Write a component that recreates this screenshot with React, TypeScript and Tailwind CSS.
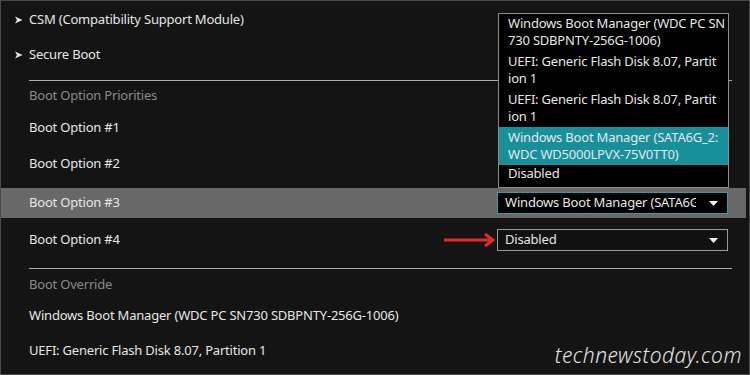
import React from 'react';

const font = { fontFamily: '"Noto Sans", "Open Sans", sans-serif' };

function Pointer() {
  return (
    <svg width="8" height="8" viewBox="0 0 8 8" className="absolute left-[-14px] top-1/2 -translate-y-1/2">
      <path d="M0 0.5 L7.5 4 L0 7.5 L2 4 Z" fill="#e8e8e8" />
    </svg>
  );
}

function Caret() {
  return (
    <svg width="9" height="5" viewBox="0 0 9 5">
      <path d="M0 0 H9 L4.5 5 Z" fill="#f2f2f2" />
    </svg>
  );
}

function RedArrow() {
  return (
    <svg width="52" height="14" viewBox="0 0 52 14" className="mr-[1px]">
      <path d="M0 7 H48" stroke="#e8262b" strokeWidth="3" />
      <path d="M41 1 L49 7 L41 13" stroke="#e8262b" strokeWidth="3" fill="none" />
    </svg>
  );
}

const listItems = [
  { lines: ['Windows Boot Manager (WDC PC SN', '730 SDBPNTY-256G-1006)'], pad: 'pt-[1px] pb-[2px]' },
  { lines: ['UEFI: Generic Flash Disk 8.07, Partit', 'ion 1'], pad: 'py-[2px]' },
  { lines: ['UEFI: Generic Flash Disk 8.07, Partit', 'ion 1'], pad: 'py-[2px]' },
  { lines: ['Windows Boot Manager (SATA6G_2:', 'WDC WD5000LPVX-75V0TT0)'], pad: 'py-[2px]', active: true },
  { lines: ['Disabled'], pad: 'pt-0 pb-[5px]' },
];

export default function App() {
  return (
    <div className="relative w-[750px] h-[375px] overflow-hidden bg-[#141414] border border-[#4a4a4a] text-[13px] tracking-[-0.2px] text-[#e6e6e6]" style={font}>
      <div className="flex flex-col pt-[1px]">
        <div className="relative h-[35px] flex items-center ml-[28px]"><Pointer />CSM (Compatibility Support Module)</div>
        <div className="relative h-[35px] flex items-center ml-[28px]"><Pointer />Secure Boot</div>
        <div className="h-[8px]" />
        <div className="h-px bg-[#a9a9a9] ml-[28px] mr-[17px]" />
        <div className="h-[30px] flex items-center ml-[28px] text-[#8a8a8a]">Boot Option Priorities</div>
        <div className="h-[34px] flex items-center ml-[28px]">Boot Option #1</div>
        <div className="h-[38px] flex items-center ml-[28px]">Boot Option #2</div>
        <div className="h-[5px]" />
        <div className="h-[30px] flex items-center bg-[#686868] mr-[3px]">
          <span className="ml-[28px] flex-1">Boot Option #3</span>
          <div className="w-[231px] h-[22px] mr-[18px] flex items-center justify-between bg-black border border-[#2aa0a8] pl-[7px] pr-[9px]">
            <span className="w-[191px] overflow-hidden whitespace-nowrap">Windows Boot Manager (SATA6G_2:</span>
            <Caret />
          </div>
        </div>
        <div className="h-[44px] flex items-center">
          <span className="ml-[28px] flex-1">Boot Option #4</span>
          <RedArrow />
          <div className="w-[231px] h-[22px] mr-[21px] flex items-center justify-between bg-[#111] border border-[#9a9a9a] pl-[7px] pr-[9px]">
            <span>Disabled</span>
            <Caret />
          </div>
        </div>
        <div className="h-[6px]" />
        <div className="h-px bg-[#a9a9a9] ml-[28px] mr-[17px]" />
        <div className="h-[32px] flex items-center ml-[28px] text-[#8a8a8a]">Boot Override</div>
        <div className="h-[30px] flex items-center ml-[28px]">Windows Boot Manager (WDC PC SN730 SDBPNTY-256G-1006)</div>
        <div className="h-[40px] flex items-center ml-[28px]">UEFI: Generic Flash Disk 8.07, Partition 1</div>
      </div>

      <div className="absolute left-[497px] top-[12px] w-[231px] bg-black border border-[#8c8c8c] leading-[17px]">
        {listItems.map((it, i) => (
          <div key={i} className={`px-[9px] ${it.pad} ${it.active ? 'bg-[#17909b]' : ''}`}>
            {it.lines.map((l, j) => (
              <div key={j} className="whitespace-nowrap">{l}</div>
            ))}
          </div>
        ))}
      </div>

      <div className="absolute right-[7px] bottom-[3px] text-[21px] italic font-light text-[#e2e2e2] tracking-[0.5px]" style={{ fontFamily: '"Noto Sans", sans-serif' }}>
        technewstoday.com
      </div>
    </div>
  );
}
